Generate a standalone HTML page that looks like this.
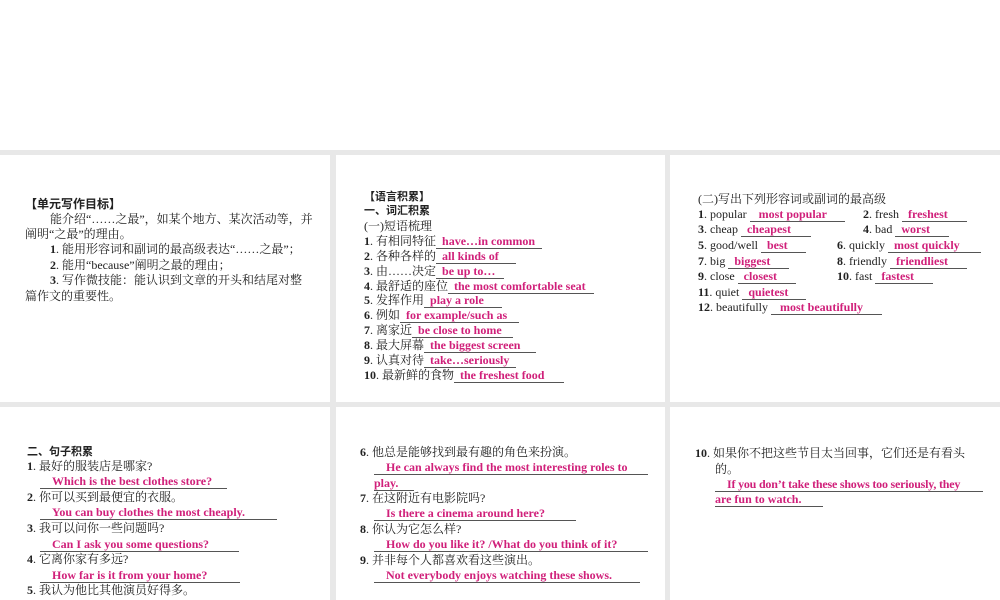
<!DOCTYPE html>
<html><head><meta charset="utf-8"><style>
body{margin:0;width:1000px;height:600px;background:#fff;position:relative;overflow:hidden;font-family:"Liberation Serif","Noto Serif CJK SC",serif;font-size:12px;color:#222}
.g{position:absolute;background:#e8e8e8}
.p{position:absolute;background:#fff}
.l{position:absolute;line-height:16px;white-space:nowrap}
.a{display:inline-block;border-bottom:1px solid #555;color:#d0207a;font-weight:bold;line-height:13px;padding-left:6px;vertical-align:baseline}
.h{font-family:"Liberation Sans","Noto Sans CJK SC",sans-serif;font-weight:bold}
</style></head><body>
<div class="g" style="left:0;top:150px;width:1000px;height:450px"></div>
<div class="p" style="left:0;top:155px;width:330px;height:247px"></div>
<div class="p" style="left:336px;top:155px;width:329px;height:247px"></div>
<div class="p" style="left:670px;top:155px;width:330px;height:247px"></div>
<div class="p" style="left:0;top:407px;width:330px;height:193px"></div>
<div class="p" style="left:336px;top:407px;width:329px;height:193px"></div>
<div class="p" style="left:670px;top:407px;width:330px;height:193px"></div>

<div class="l h" style="left:25px;top:196px">【单元写作目标】</div>
<div class="l" style="left:50px;top:211px">能介绍“……之最”，如某个地方、某次活动等，并</div>
<div class="l" style="left:25px;top:226px">阐明“之最”的理由。</div>
<div class="l" style="left:50px;top:241px"><b>1</b>. 能用形容词和副词的最高级表达“……之最”；</div>
<div class="l" style="left:50px;top:257px"><b>2</b>. 能用“because”阐明之最的理由；</div>
<div class="l" style="left:50px;top:272px"><b>3</b>. 写作微技能：能认识到文章的开头和结尾对整</div>
<div class="l" style="left:25px;top:288px">篇作文的重要性。</div>

<div class="l h" style="left:364px;top:189px;font-size:11px">【语言积累】</div>
<div class="l h" style="left:364px;top:203px;font-size:11px">一、词汇积累</div>
<div class="l" style="left:364px;top:218px">(一)短语梳理</div>
<div class="l" style="left:364px;top:233px"><b>1</b>. 有相同特征<span class="a" style="width:100px">have…in common</span></div>
<div class="l" style="left:364px;top:248px"><b>2</b>. 各种各样的<span class="a" style="width:74px">all kinds of</span></div>
<div class="l" style="left:364px;top:263px"><b>3</b>. 由……决定<span class="a" style="width:62px">be up to…</span></div>
<div class="l" style="left:364px;top:278px"><b>4</b>. 最舒适的座位<span class="a" style="width:140px">the most comfortable seat</span></div>
<div class="l" style="left:364px;top:292px"><b>5</b>. 发挥作用<span class="a" style="width:72px">play a role</span></div>
<div class="l" style="left:364px;top:307px"><b>6</b>. 例如<span class="a" style="width:113px">for example/such as</span></div>
<div class="l" style="left:364px;top:322px"><b>7</b>. 离家近<span class="a" style="width:95px">be close to home</span></div>
<div class="l" style="left:364px;top:337px"><b>8</b>. 最大屏幕<span class="a" style="width:106px">the biggest screen</span></div>
<div class="l" style="left:364px;top:352px"><b>9</b>. 认真对待<span class="a" style="width:86px">take…seriously</span></div>
<div class="l" style="left:364px;top:367px"><b>10</b>. 最新鲜的食物<span class="a" style="width:104px">the freshest food</span></div>

<div class="l" style="left:698px;top:191px">(二)写出下列形容词或副词的最高级</div>
<div class="l" style="left:698px;top:206px"><b>1</b>. popular <span class="a" style="width:89px">&nbsp;most popular</span></div>
<div class="l" style="left:863px;top:206px"><b>2</b>. fresh <span class="a" style="width:59px">freshest</span></div>
<div class="l" style="left:698px;top:221px"><b>3</b>. cheap <span class="a" style="width:64px">cheapest</span></div>
<div class="l" style="left:863px;top:221px"><b>4</b>. bad <span class="a" style="width:48px">worst</span></div>
<div class="l" style="left:698px;top:237px"><b>5</b>. good/well <span class="a" style="width:39px">best</span></div>
<div class="l" style="left:837px;top:237px"><b>6</b>. quickly <span class="a" style="width:87px">most quickly</span></div>
<div class="l" style="left:698px;top:253px"><b>7</b>. big <span class="a" style="width:55px">biggest</span></div>
<div class="l" style="left:837px;top:253px"><b>8</b>. friendly <span class="a" style="width:71px">friendliest</span></div>
<div class="l" style="left:698px;top:268px"><b>9</b>. close <span class="a" style="width:52px">closest</span></div>
<div class="l" style="left:837px;top:268px"><b>10</b>. fast <span class="a" style="width:52px">fastest</span></div>
<div class="l" style="left:698px;top:284px"><b>11</b>. quiet <span class="a" style="width:58px">quietest</span></div>
<div class="l" style="left:698px;top:299px"><b>12</b>. beautifully <span class="a" style="width:105px">&nbsp;most beautifully</span></div>

<div class="l h" style="left:27px;top:444px;font-size:11px">二、句子积累</div>
<div class="l" style="left:27px;top:458px"><b>1</b>. 最好的服装店是哪家?</div>
<div class="l" style="left:40px;top:473px"><span class="a" style="width:175px;padding-left:12px">Which is the best clothes store?</span></div>
<div class="l" style="left:27px;top:489px"><b>2</b>. 你可以买到最便宜的衣服。</div>
<div class="l" style="left:40px;top:504px"><span class="a" style="width:225px;padding-left:12px">You can buy clothes the most cheaply.</span></div>
<div class="l" style="left:27px;top:520px"><b>3</b>. 我可以问你一些问题吗?</div>
<div class="l" style="left:40px;top:536px"><span class="a" style="width:187px;padding-left:12px">Can I ask you some questions?</span></div>
<div class="l" style="left:27px;top:551px"><b>4</b>. 它离你家有多远?</div>
<div class="l" style="left:40px;top:567px"><span class="a" style="width:188px;padding-left:12px">How far is it from your home?</span></div>
<div class="l" style="left:27px;top:582px"><b>5</b>. 我认为他比其他演员好得多。</div>

<div class="l" style="left:360px;top:444px"><b>6</b>. 他总是能够找到最有趣的角色来扮演。</div>
<div class="l" style="left:374px;top:459px"><span class="a" style="width:262px;padding-left:12px">He can always find the most interesting roles to</span></div>
<div class="l" style="left:374px;top:475px"><span class="a" style="width:40px;padding-left:0">play.</span></div>
<div class="l" style="left:360px;top:490px"><b>7</b>. 在这附近有电影院吗?</div>
<div class="l" style="left:374px;top:505px"><span class="a" style="width:190px;padding-left:12px">Is there a cinema around here?</span></div>
<div class="l" style="left:360px;top:521px"><b>8</b>. 你认为它怎么样?</div>
<div class="l" style="left:374px;top:536px"><span class="a" style="width:262px;padding-left:12px">How do you like it? /What do you think of it?</span></div>
<div class="l" style="left:360px;top:552px"><b>9</b>. 并非每个人都喜欢看这些演出。</div>
<div class="l" style="left:374px;top:567px"><span class="a" style="width:254px;padding-left:12px">Not everybody enjoys watching these shows.</span></div>

<div class="l" style="left:695px;top:445px"><b>10</b>. 如果你不把这些节目太当回事，它们还是有看头</div>
<div class="l" style="left:715px;top:461px">的。</div>
<div class="l" style="left:715px;top:476px"><span class="a" style="width:256px;padding-left:12px;letter-spacing:-0.2px">If you don’t take these shows too seriously, they</span></div>
<div class="l" style="left:715px;top:491px"><span class="a" style="width:108px;padding-left:0">are fun to watch.</span></div>
</body></html>
